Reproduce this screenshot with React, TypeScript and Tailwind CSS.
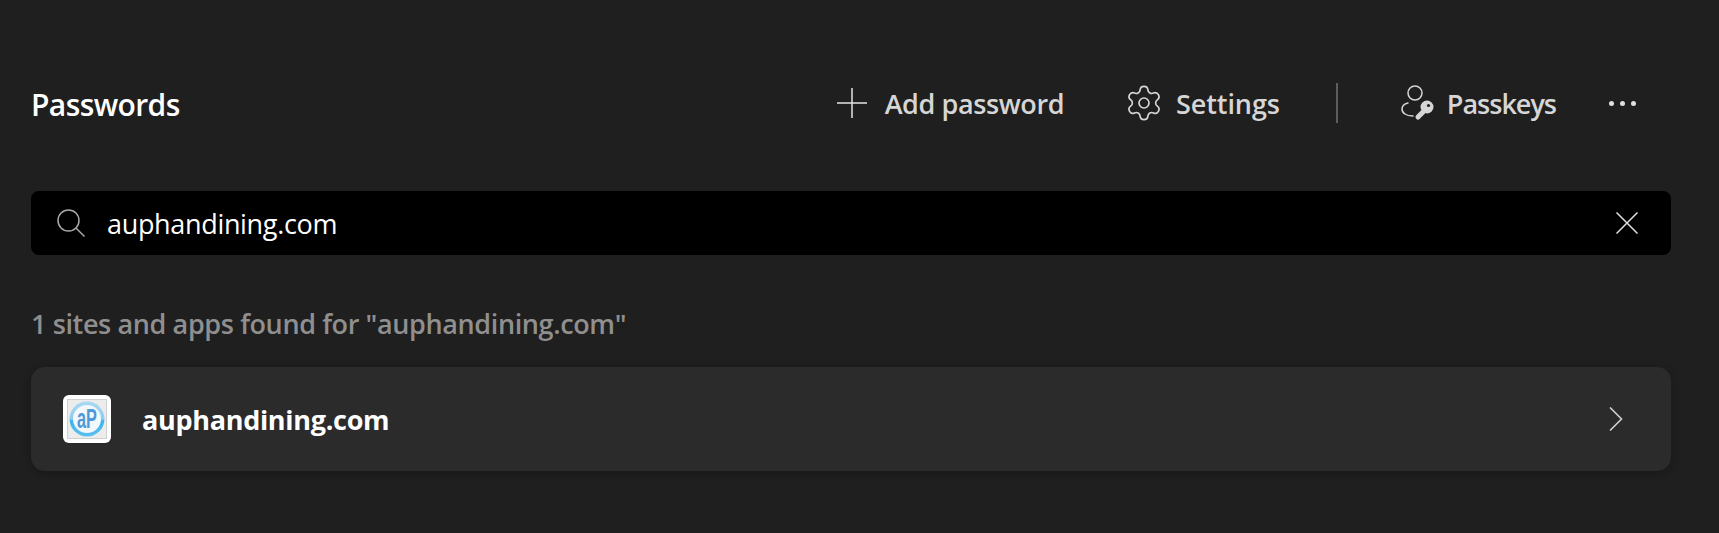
import { Settings } from 'lucide-react'

function PlusIcon() {
  return (
    <svg width="30" height="30" viewBox="0 0 30 30" fill="none" stroke="#e4e4e4" strokeWidth="1.500">
      <path d="M15 0v30M0 15h30" />
    </svg>
  )
}

function SearchIcon() {
  return (
    <svg width="28" height="28" viewBox="0 0 28 28" fill="none" stroke="#a8a8a8" strokeWidth="1.500">
      <circle cx="11.500" cy="11.500" r="10.500" />
      <path d="M19 19l8.500 8.500" />
    </svg>
  )
}

function CloseIcon() {
  return (
    <svg width="22" height="22" viewBox="0 0 22 22" fill="none" stroke="#e0e0e0" strokeWidth="1.500">
      <path d="M0.500 0.500l21 21M21.500 0.500l-21 21" />
    </svg>
  )
}

function Chevron() {
  return (
    <svg width="14" height="24" viewBox="0 0 14 24" fill="none" stroke="#d0d0d0" strokeWidth="1.600">
      <path d="M1 0.500L12.500 12L1 23.500" />
    </svg>
  )
}

function PasskeyIcon() {
  return (
    <svg width="34" height="36" viewBox="0 0 34 36" fill="none" className="text-[#d6d6d6]">
      <circle cx="14" cy="8" r="7" stroke="currentColor" strokeWidth="1.500" />
      <path d="M7 18C3 19 1 21 1 24C1 28 5 31 12 31" stroke="currentColor" strokeWidth="1.500" strokeLinecap="round" />
      <circle cx="26" cy="22" r="6.500" fill="currentColor" />
      <path d="M22 27L17 32" stroke="currentColor" strokeWidth="5" strokeLinecap="round" />
      <circle cx="27.500" cy="20.500" r="1.600" fill="#1f1f1f" />
    </svg>
  )
}

function SiteLogo() {
  return (
    <div className="flex size-12 shrink-0 items-center justify-center rounded-[6px] bg-white">
      <div className="flex size-[40px] items-center justify-center border border-[#d0d0d0] bg-[#ececec]">
        <svg width="36" height="36" viewBox="0 0 36 36">
          <defs>
            <linearGradient id="ring" x1="0" y1="0" x2="0" y2="1">
              <stop offset="0" stopColor="#a9d8f2" />
              <stop offset="0.5" stopColor="#8fcdf0" />
              <stop offset="0.55" stopColor="#3db2ec" />
              <stop offset="1" stopColor="#5cc0f0" />
            </linearGradient>
          </defs>
          <circle cx="18" cy="18" r="17.500" fill="url(#ring)" />
          <circle cx="18" cy="18" r="14" fill="#f2f8fc" />
          <text
            transform="translate(18 27) scale(0.58 1)"
            textAnchor="middle"
            fontSize="28"
            fontWeight="700"
            fill="#4f9ad6"
            fontFamily="'Liberation Sans', sans-serif"
          >
            aP
          </text>
        </svg>
      </div>
    </div>
  )
}

export default function App() {
  return (
    <div className="h-[533px] bg-[#1f1f1f] pl-[31px] pr-[48px] pt-[83px] font-['Open_Sans','Noto_Sans',sans-serif]">
      <header className="flex h-10 items-center">
        <h1 className="pt-0.5 text-[30px] font-semibold tracking-[-0.6px] text-white">Passwords</h1>
        <div className="ml-auto flex items-center text-[27px] font-semibold text-[#d6d6d6]">
          <button className="flex items-center gap-[18px]">
            <PlusIcon />
            <span className="pt-0.5 tracking-[-0.4px]">Add password</span>
          </button>
          <button className="ml-[60px] flex items-center gap-[12px]">
            <Settings size={40} strokeWidth={1} />
            <span className="pt-0.5 tracking-[-0.1px]">Settings</span>
          </button>
          <div className="ml-[56px] h-10 w-0.5 bg-[#5c5c5c]" />
          <button className="ml-[63px] flex items-center gap-[12px]">
            <PasskeyIcon />
            <span className="pt-0.5 tracking-[-1px]">Passkeys</span>
          </button>
          <div className="ml-[53px] mr-[35px] flex gap-[6px]">
            <span className="size-[5px] rounded-full bg-[#e0e0e0]" />
            <span className="size-[5px] rounded-full bg-[#e0e0e0]" />
            <span className="size-[5px] rounded-full bg-[#e0e0e0]" />
          </div>
        </div>
      </header>

      <div className="mt-[68px] flex h-16 items-center rounded-[8px] bg-black pl-[26px] pr-[33px]">
        <SearchIcon />
        <span className="ml-[22px] pt-0.5 text-[27px] tracking-[-0.33px] text-white">auphandining.com</span>
        <div className="ml-auto">
          <CloseIcon />
        </div>
      </div>

      <p className="mt-[50px] text-[27px] leading-[38px] font-semibold tracking-[-0.38px] text-[#8f8f8f]">
        1 sites and apps found for "auphandining.com"
      </p>

      <div className="mt-[24px] flex h-[104px] items-center rounded-[14px] bg-[#2b2b2b] pl-[32px] pr-[48px] shadow-[0_2px_8px_rgba(0,0,0,0.25)]">
        <SiteLogo />
        <span className="ml-[31px] pt-0.5 text-[27px] font-bold tracking-[-0.3px] text-white">auphandining.com</span>
        <div className="ml-auto">
          <Chevron />
        </div>
      </div>
    </div>
  )
}
